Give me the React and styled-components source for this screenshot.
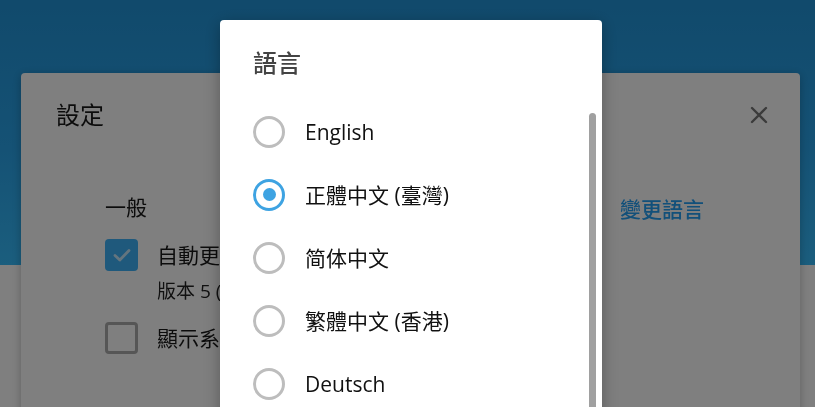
import React from 'react'
import styled, { createGlobalStyle } from 'styled-components'

const GlobalStyle = createGlobalStyle`
  html, body {
    margin: 0;
    padding: 0;
    height: 100%;
    overflow: hidden;
    background: #ffffff;
  }
  body {
    font-family: "Open Sans", "Noto Sans CJK TC", sans-serif;
    color: #111;
  }
`

const Page = styled.div`
  height: 100vh;
  display: flex;
  flex-direction: column;
`

const Header = styled.header`
  height: 265px;
  flex-shrink: 0;
  background: linear-gradient(180deg, #2294d8 0%, #2aa4ea 55%, #36bcfc 100%);
`

const Overlay = styled.div`
  position: fixed;
  inset: 0;
  background: rgba(0, 0, 0, 0.5);
`

const SettingsDialog = styled.section`
  position: fixed;
  left: 21px;
  top: 73px;
  width: 779px;
  height: 420px;
  background: #fff;
  border-radius: 4px;
  box-shadow: 0 2px 10px rgba(0, 0, 0, 0.25);
`

const SettingsHeader = styled.div`
  display: flex;
  align-items: center;
  justify-content: space-between;
  padding: 26px 29px 0 35px;
`

const DialogTitle = styled.h2`
  margin: 0;
  font-size: 24px;
  line-height: 32px;
  font-weight: ${p => p.$muted ? 500 : 400};
  color: ${p => p.$muted ? '#444' : '#191919'};
`

const CloseButton = styled.button`
  width: 24px;
  height: 24px;
  padding: 0;
  border: none;
  background: none;
  display: flex;
  align-items: center;
  justify-content: center;
`

const SettingsBody = styled.div`
  padding: 59px 96px 0 84px;
`

const SectionRow = styled.div`
  display: flex;
  align-items: center;
  justify-content: space-between;
`

const SectionTitle = styled.h3`
  margin: 0;
  font-size: 21px;
  line-height: 30px;
  font-weight: 400;
  color: #191919;
`

const LinkButton = styled.a`
  font-size: 21px;
  line-height: 30px;
  font-weight: 500;
  color: #25a0f4;
  text-decoration: none;
  margin-top: 4px;
`

const OptionRow = styled.div`
  display: flex;
  align-items: center;
  gap: 19px;
  margin-top: ${p => p.$top}px;
`

const CheckBox = styled.span`
  width: 33px;
  height: 32px;
  box-sizing: border-box;
  border-radius: 4px;
  flex-shrink: 0;
  display: flex;
  align-items: center;
  justify-content: center;
  background: ${p => p.$checked ? '#3eb2f8' : '#fff'};
  border: ${p => p.$checked ? 'none' : '3px solid #acacac'};
`

const OptionLabel = styled.span`
  font-size: 21px;
  line-height: 30px;
  color: #191919;
  white-space: nowrap;
`

const SubText = styled.div`
  margin: 7px 0 0 52px;
  font-size: 19px;
  line-height: 26px;
  color: #222;
  white-space: nowrap;
`

const LanguageDialog = styled.section`
  position: fixed;
  left: 220px;
  top: 20px;
  width: 382px;
  height: 480px;
  background: #fff;
  border-radius: 4px;
  box-shadow: 0 4px 16px rgba(0, 0, 0, 0.3);
  display: flex;
  flex-direction: column;
`

const LanguageHeader = styled.div`
  padding: 27px 33px 0;
  height: 80px;
  box-sizing: border-box;
  flex-shrink: 0;
`

const ListArea = styled.div`
  display: flex;
  height: 380px;
  padding-right: 6px;
  overflow: hidden;
`

const LanguageList = styled.ul`
  list-style: none;
  margin: 0;
  padding: 0 0 0 33px;
  flex: 1;
`

const ScrollTrack = styled.div`
  width: 7px;
  margin-top: 13px;
  flex-shrink: 0;
`

const ScrollThumb = styled.div`
  width: 7px;
  border-radius: 4px;
  background: #a0a0a0;
`

const LanguageItem = styled.li`
  height: 63px;
  display: flex;
  align-items: center;
  gap: 20px;
`

const Radio = styled.span`
  width: 32px;
  height: 32px;
  box-sizing: border-box;
  border-radius: 50%;
  flex-shrink: 0;
  display: flex;
  align-items: center;
  justify-content: center;
  border: 3px solid ${p => p.$checked ? '#3ea3e2' : '#bdbdbd'};

  &::after {
    content: '';
    width: 13px;
    height: 13px;
    border-radius: 50%;
    background: #3ea3e2;
    display: ${p => p.$checked ? 'block' : 'none'};
  }
`

const LanguageName = styled.span`
  font-size: 21px;
  line-height: 30px;
  color: #111;
`

const languages = [
  'English',
  '正體中文 (臺灣)',
  '简体中文',
  '繁體中文 (香港)',
  'Deutsch',
  'Español',
  'Français'
]

const CloseIcon = () => (
  <svg width="18" height="18" viewBox="0 0 18 18">
    <path d="M2 2 L16 16 M16 2 L2 16" stroke="#777" strokeWidth="2.4" strokeLinecap="round" />
  </svg>
)

const CheckIcon = () => (
  <svg width="20" height="16" viewBox="0 0 20 16">
    <path d="M3 8.5 L7.8 13 L17 3.5" fill="none" stroke="rgba(255,255,255,0.72)" strokeWidth="2.8" strokeLinecap="round" strokeLinejoin="round" />
  </svg>
)

const App = () => {
  const visible = 380
  const content = languages.length * 63
  const thumbHeight = Math.round((visible * visible) / content)

  return (
    <>
      <GlobalStyle />
      <Page>
        <Header />
      </Page>
      <SettingsDialog>
        <SettingsHeader>
          <DialogTitle>設定</DialogTitle>
          <CloseButton aria-label="關閉">
            <CloseIcon />
          </CloseButton>
        </SettingsHeader>
        <SettingsBody>
          <SectionRow>
            <SectionTitle>一般</SectionTitle>
            <LinkButton href="#">變更語言</LinkButton>
          </SectionRow>
          <OptionRow $top={15}>
            <CheckBox $checked>
              <CheckIcon />
            </CheckBox>
            <OptionLabel>自動更新</OptionLabel>
          </OptionRow>
          <SubText>版本 5 (最新版本)</SubText>
          <OptionRow $top={18}>
            <CheckBox />
            <OptionLabel>顯示系統通知</OptionLabel>
          </OptionRow>
        </SettingsBody>
      </SettingsDialog>
      <Overlay />
      <LanguageDialog>
        <LanguageHeader>
          <DialogTitle $muted>語言</DialogTitle>
        </LanguageHeader>
        <ListArea>
          <LanguageList>
            {languages.map((name, i) => (
              <LanguageItem key={name}>
                <Radio $checked={i === 1} />
                <LanguageName>{name}</LanguageName>
              </LanguageItem>
            ))}
          </LanguageList>
          <ScrollTrack>
            <ScrollThumb style={{ height: thumbHeight }} />
          </ScrollTrack>
        </ListArea>
      </LanguageDialog>
    </>
  )
}

export default App
